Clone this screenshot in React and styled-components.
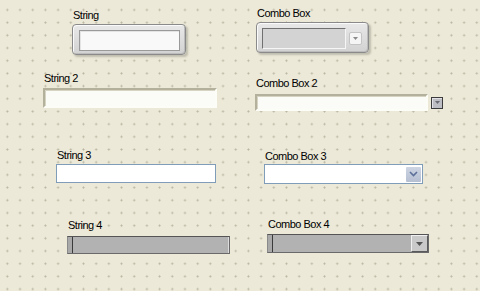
import styled, { createGlobalStyle } from "styled-components";

const GlobalStyle = createGlobalStyle`
  html, body {
    margin: 0;
    padding: 0;
  }
  body {
    font-family: "Liberation Sans", Arial, sans-serif;
  }
`;

const Panel = styled.div`
  position: relative;
  width: 480px;
  height: 291px;
  overflow: hidden;
  background-color: #ece9d8;
  background-image: radial-gradient(circle, #b9b5a2 0.7px, rgba(236, 233, 216, 0) 1.4px);
  background-size: 12.7px 12.7px;
  background-position: 1px 3.6px;
`;

// controls sit on the front panel canvas at their own coordinates
const Control = styled.div`
  position: absolute;
  left: ${(p) => p.$x}px;
  top: ${(p) => p.$y}px;
  display: flex;
  flex-direction: column;
  align-items: flex-start;
  gap: ${(p) => p.$gap || 2}px;
`;

const Label = styled.div`
  font-size: 11px;
  line-height: 13px;
  letter-spacing: -0.5px;
  color: #000;
  padding-left: 1px;
  white-space: nowrap;
`;

/* silver style */
const SilverFrame = styled.div`
  box-sizing: border-box;
  width: ${(p) => p.$w}px;
  height: 31px;
  display: flex;
  align-items: center;
  gap: 3px;
  padding: ${(p) => p.$pad};
  border: 1px solid #8a8a8a;
  border-radius: 4px;
  background: linear-gradient(#e8e8e8, #d2d2d2);
  box-shadow: inset 1px 1px 0 #fafafa, inset -1px -1px 0 #bcbcbc,
    2px 2px 2px rgba(90, 90, 80, 0.3);
`;

const SilverText = styled.div`
  box-sizing: border-box;
  width: 101px;
  height: 21px;
  background: #f9f9f9;
  border: 1px solid #9a9a9a;
  box-shadow: inset 1px 1px 0 #e4e4e4;
`;

const SilverList = styled.div`
  box-sizing: border-box;
  width: 84px;
  height: 21px;
  background: #d3d3d3;
  border: 1px solid;
  border-color: #707070 #f6f6f6 #f6f6f6 #707070;
`;

const SilverButton = styled.div`
  box-sizing: border-box;
  width: 13px;
  height: 13px;
  display: flex;
  align-items: center;
  justify-content: center;
  background: #f5f5f5;
  border: 1px solid #c4c4c4;
  border-radius: 2px;
`;

/* dialog style */
const SunkenField = styled.div`
  box-sizing: border-box;
  width: ${(p) => p.$w}px;
  height: ${(p) => p.$h}px;
  background: #fbfbf7;
  border: 2px solid;
  border-color: #b3b09c #fdfdf8 #fdfdf8 #b3b09c;
  box-shadow: inset 1px 1px 0 #d6d3c2;
`;

const Row = styled.div`
  display: flex;
  align-items: center;
  gap: ${(p) => p.$gap || 0}px;
`;

const SmallButton = styled.div`
  box-sizing: border-box;
  width: 12px;
  height: 12px;
  display: flex;
  align-items: center;
  justify-content: center;
  background: #bdbdc4;
  border: 1px solid #3c3c3c;
  box-shadow: inset 1px 1px 0 #e2e2e6;
`;

/* system style */
const SystemField = styled.div`
  box-sizing: border-box;
  width: ${(p) => p.$w}px;
  height: ${(p) => p.$h}px;
  display: flex;
  align-items: center;
  justify-content: flex-end;
  padding-right: 1px;
  background: #fff;
  border: 1px solid #7f9db9;
`;

const SystemButton = styled.div`
  box-sizing: border-box;
  width: 15px;
  height: 15px;
  display: flex;
  align-items: center;
  justify-content: center;
  background: linear-gradient(#cdd5e3, #b5bfd2);
  border-radius: 1px;
`;

/* classic style */
const ClassicField = styled.div`
  box-sizing: border-box;
  width: ${(p) => p.$w}px;
  height: ${(p) => p.$h}px;
  display: flex;
  align-items: stretch;
  justify-content: flex-end;
  background: #b2b2b2;
  border: 1px solid;
  border-color: #555 #6a6a6a #6a6a6a #8a8a8a;
  box-shadow: inset 4px 0 0 #a9a9a9, inset 5px 0 0 #3a3a3a,
    inset -1px 0 0 #dcdcdc;
`;

const ClassicButton = styled.div`
  box-sizing: border-box;
  width: 17px;
  display: flex;
  align-items: center;
  justify-content: center;
  background: #c9c9c9;
  border: 1px solid;
  border-color: #f0f0f0 #5a5a5a #5a5a5a #f0f0f0;
`;

const Arrow = ({ color = "#8a8a8a", w = 5, h = 3 }) => (
  <svg width={w} height={h} viewBox={`0 0 ${w} ${h}`}>
    <polygon points={`0,0 ${w},0 ${w / 2},${h}`} fill={color} />
  </svg>
);

const Chevron = () => (
  <svg width="9" height="6" viewBox="0 0 9 6">
    <polyline
      points="1,1 4.5,4.5 8,1"
      fill="none"
      stroke="#5d709a"
      strokeWidth="1.6"
    />
  </svg>
);

export default function App() {
  return (
    <Panel>
      <GlobalStyle />

      <Control $x={72} $y={9} $gap={2}>
        <Label>String</Label>
        <SilverFrame $w={114} $pad="5px 5px 3px 6px">
          <SilverText />
        </SilverFrame>
      </Control>

      <Control $x={256} $y={7} $gap={2}>
        <Label>Combo Box</Label>
        <SilverFrame $w={113} $pad="5px 6px 3px 5px">
          <SilverList />
          <SilverButton>
            <Arrow />
          </SilverButton>
        </SilverFrame>
      </Control>

      <Control $x={43} $y={72} $gap={3}>
        <Label>String 2</Label>
        <SunkenField $w={174} $h={20} />
      </Control>

      <Control $x={255} $y={77} $gap={4}>
        <Label>Combo Box 2</Label>
        <Row $gap={3}>
          <SunkenField $w={173} $h={17} />
          <SmallButton>
            <Arrow color="#6a6a72" w={5} h={3} />
          </SmallButton>
        </Row>
      </Control>

      <Control $x={56} $y={149} $gap={2}>
        <Label>String 3</Label>
        <SystemField $w={160} $h={19} />
      </Control>

      <Control $x={264} $y={150} $gap={1}>
        <Label>Combo Box 3</Label>
        <SystemField $w={159} $h={20}>
          <SystemButton>
            <Chevron />
          </SystemButton>
        </SystemField>
      </Control>

      <Control $x={67} $y={219} $gap={4}>
        <Label>String 4</Label>
        <ClassicField $w={163} $h={18} />
      </Control>

      <Control $x={267} $y={218} $gap={3}>
        <Label>Combo Box 4</Label>
        <ClassicField $w={162} $h={19}>
          <ClassicButton>
            <Arrow color="#555" w={7} h={4} />
          </ClassicButton>
        </ClassicField>
      </Control>
    </Panel>
  );
}
